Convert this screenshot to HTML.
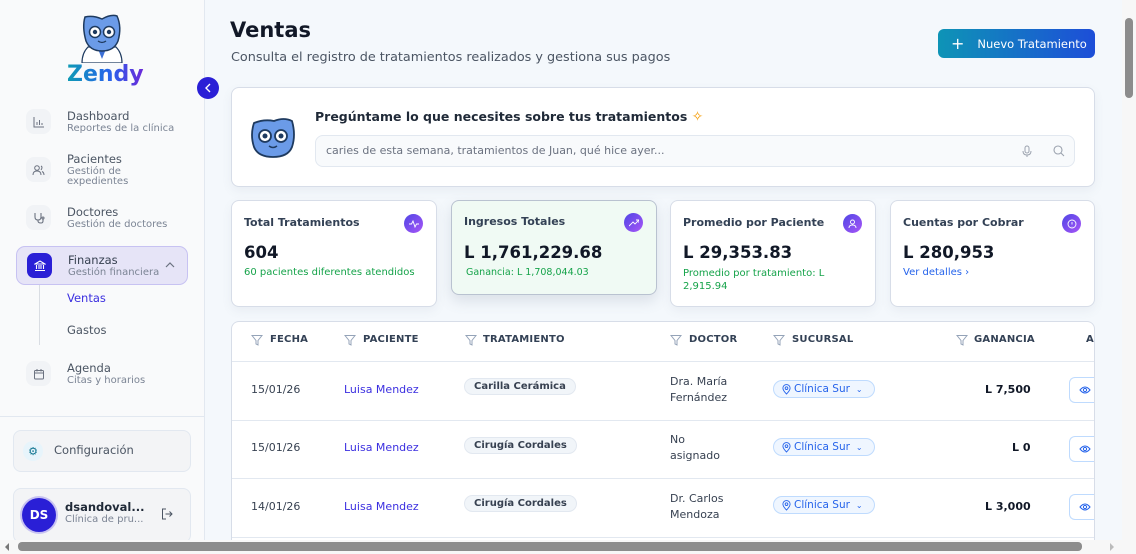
<!DOCTYPE html>
<html><head><meta charset="utf-8"><style>
*{box-sizing:border-box;margin:0;padding:0}
body{width:1136px;height:554px;overflow:hidden;font-family:"DejaVu Sans","Liberation Sans",sans-serif;background:#f4f8fc;position:relative;color:#1e293b}
.a{position:absolute}
.side{left:0;top:0;width:205px;height:540px;background:#f9fafb;border-right:1px solid #e2e8f0}
.ib{width:25px;height:25px;border-radius:8px;background:#f1f3f6;display:flex;align-items:center;justify-content:center}
.t{font-size:11.5px;color:#4b5563}
.s{font-size:10px;color:#7b8494;line-height:10px}
.card{background:#fff;border:1px solid #d7dde8;border-radius:8px;box-shadow:0 4px 10px rgba(100,116,139,.08)}
.sl{font-size:11px;font-weight:bold;color:#334155}
.sv{font-size:16.5px;font-weight:bold;color:#111827}
.gi{width:19px;height:19px;border-radius:50%;background:linear-gradient(135deg,#4f46e5,#a855f7);display:flex;align-items:center;justify-content:center}
.th{font-size:10px;font-weight:bold;color:#334155;letter-spacing:.2px}
.td{font-size:11px;color:#374151}
.pill{font-size:10px;font-weight:bold;color:#374151;background:#f1f5f9;border:1px solid #e2e8f0;border-radius:10px;padding:2px 9px}
.suc{width:102px;height:18px;border:1px solid #bfdbfe;background:#eff6ff;border-radius:9px;color:#2563eb;font-size:10.5px;display:flex;align-items:center;padding-left:8px;gap:3px}
.eye{width:25px;height:26px;border:1px solid #bfdbfe;border-radius:6px 0 0 6px;border-right:none;background:#fff;display:flex;align-items:center;padding-left:9px}
.hl{height:1px;background:#e2e8f0}
</style></head><body>
<div class="a side">
 <svg class="a" style="left:78px;top:13px" width="48" height="50" viewBox="0 0 48 50">
  <path d="M10 34 Q4 40 4 50 H44 Q44 40 38 34Z" fill="#fff" stroke="#1e3a5f" stroke-width="1.2"/>
  <path d="M20 36 L24 46 L28 36Z" fill="#3b6fd6"/>
  <path d="M7 4 Q15 2 24 6 Q33 1 39 3 Q44 14 40 28 Q36 38 24 38 Q12 38 8 28 Q4 14 7 4Z" fill="#6b9be8" stroke="#1e3a5f" stroke-width="1.5"/>
  <circle cx="17" cy="19" r="5.5" fill="#fff" stroke="#1e3a5f" stroke-width="1.5"/><circle cx="31" cy="19" r="5.5" fill="#fff" stroke="#1e3a5f" stroke-width="1.5"/>
  <circle cx="17" cy="19" r="2.2" fill="#1e3a5f"/><circle cx="31" cy="19" r="2.2" fill="#1e3a5f"/>
  <path d="M20 28 Q24 31 28 28" fill="none" stroke="#1e3a5f" stroke-width="1.3"/>
 </svg>
 <div class="a" style="left:67px;top:62px;font-size:22px;font-weight:bold;background:linear-gradient(90deg,#0f9bb4,#2563eb 55%,#6d28d9);-webkit-background-clip:text;color:transparent">Zendy</div>
 <div class="a ib" style="left:26px;top:109px"><svg width="12" height="12" viewBox="0 0 12 12" fill="none" stroke="#6b7280" stroke-width="1"><path d="M1 1V11H11M4 9V6M6.5 9V4M9 9V7"/></svg></div>
 <div class="a t" style="left:67px;top:109px">Dashboard</div><div class="a s" style="left:67px;top:124px">Reportes de la clínica</div>
 <div class="a ib" style="left:26px;top:157px"><svg width="13" height="12" viewBox="0 0 13 12" fill="none" stroke="#6b7280" stroke-width="1"><circle cx="5" cy="4" r="2.3"/><path d="M1 11Q1 7 5 7Q9 7 9 11M9 2Q11 3 9 6M10 7.5Q12 8.5 12 11"/></svg></div>
 <div class="a t" style="left:67px;top:152px">Pacientes</div><div class="a s" style="left:67px;top:167px">Gestión de<br>expedientes</div>
 <div class="a ib" style="left:26px;top:205px"><svg width="12" height="12" viewBox="0 0 12 12" fill="none" stroke="#6b7280" stroke-width="1.1"><path d="M2 1V5Q2 8 5 8Q8 8 8 5V1M5 8V9Q5 11 8 11Q10 11 10 9V7"/><circle cx="10" cy="6" r="1"/></svg></div>
 <div class="a t" style="left:67px;top:205px">Doctores</div><div class="a s" style="left:67px;top:220px">Gestión de doctores</div>
 <div class="a" style="left:16px;top:246px;width:172px;height:39px;background:#e6e4f7;border:1px solid #c7c2f2;border-radius:9px"></div>
 <div class="a" style="left:27px;top:253px;width:25px;height:25px;border-radius:7px;background:#2a1fd6;display:flex;align-items:center;justify-content:center"><svg width="12" height="12" viewBox="0 0 12 12" fill="none" stroke="#fff" stroke-width="1.1"><path d="M1 4L6 1L11 4ZM2.5 5V9M5 5V9M7 5V9M9.5 5V9M1 10.5H11"/></svg></div>
 <div class="a t" style="left:68px;top:253px;color:#374151">Finanzas</div><div class="a s" style="left:68px;top:268px">Gestión financiera</div>
 <svg class="a" style="left:165px;top:262px" width="10" height="6" viewBox="0 0 10 6"><path d="M1 5L5 1L9 5" fill="none" stroke="#6b7280" stroke-width="1.2"/></svg>
 <div class="a" style="left:39px;top:285px;width:1px;height:60px;background:#d9dde3"></div>
 <div class="a t" style="left:67px;top:291px;color:#3b2fe0">Ventas</div>
 <div class="a t" style="left:67px;top:323px">Gastos</div>
 <div class="a ib" style="left:26px;top:361px"><svg width="12" height="12" viewBox="0 0 12 12" fill="none" stroke="#6b7280" stroke-width="1"><rect x="1.5" y="2.5" width="9" height="8.5" rx="1"/><path d="M1.5 5H10.5M4 1V3.5M8 1V3.5"/></svg></div>
 <div class="a t" style="left:67px;top:361px">Agenda</div><div class="a s" style="left:67px;top:376px">Citas y horarios</div>
 <div class="a hl" style="left:0;top:416px;width:204px"></div>
 <div class="a" style="left:13px;top:430px;width:178px;height:42px;background:#f3f4f6;border:1px solid #e2e8f0;border-radius:8px"></div>
 <div class="a" style="left:23px;top:441px;width:20px;height:20px;border-radius:50%;background:#e7f4fb;display:flex;align-items:center;justify-content:center;color:#0e7490;font-size:11px">⚙</div>
 <div class="a t" style="left:54px;top:443px">Configuración</div>
 <div class="a" style="left:13px;top:488px;width:178px;height:55px;background:#f3f4f6;border:1px solid #e2e8f0;border-radius:8px"></div>
 <div class="a" style="left:22px;top:498px;width:34px;height:34px;border-radius:50%;background:#2a1fd6;box-shadow:0 0 0 2px #c7c2f2;color:#fff;font-size:12px;font-weight:bold;display:flex;align-items:center;justify-content:center">DS</div>
 <div class="a" style="left:65px;top:500px;font-size:11.5px;font-weight:bold;color:#1f2937">dsandoval...</div>
 <div class="a s" style="left:65px;top:515px;font-size:10px">Clínica de pru...</div>
 <svg class="a" style="left:161px;top:508px" width="12" height="12" viewBox="0 0 12 12" fill="none" stroke="#4b5563" stroke-width="1"><path d="M5 1H1.5V11H5M4.5 6H11M8.5 3.5L11 6L8.5 8.5"/></svg>
</div>
<div class="a" style="left:197px;top:77px;width:22px;height:22px;border-radius:50%;background:#2a1fd6;display:flex;align-items:center;justify-content:center"><svg width="8" height="10" viewBox="0 0 8 10"><path d="M6 1L2 5L6 9" fill="none" stroke="#fff" stroke-width="1.4"/></svg></div>

<div class="a" style="left:230px;top:18px;font-size:21px;font-weight:bold;color:#111827">Ventas</div>
<div class="a" style="left:231px;top:50px;font-size:12.8px;color:#4b5563">Consulta el registro de tratamientos realizados y gestiona sus pagos</div>
<div class="a" style="left:938px;top:29px;width:157px;height:29px;border-radius:6px;background:linear-gradient(90deg,#0e94b6,#1d4ed8);color:#fff;font-size:11.5px;display:flex;align-items:center"><span style="font-size:16px;margin:0 13px 0 13px">+</span>Nuevo Tratamiento</div>

<div class="a card" style="left:231px;top:87px;width:864px;height:100px"></div>
<svg class="a" style="left:250px;top:115px" width="46" height="44" viewBox="0 0 46 44"><path d="M4 8Q14 4 24 6Q34 2 42 6Q46 20 42 32Q38 42 23 42Q8 42 4 32Q0 20 4 8Z" fill="#6b9be8" stroke="#1e3a5f" stroke-width="1.8"/><circle cx="15" cy="21" r="6" fill="#fff" stroke="#1e3a5f" stroke-width="1.8"/><circle cx="31" cy="21" r="6" fill="#fff" stroke="#1e3a5f" stroke-width="1.8"/><circle cx="15" cy="21" r="2.5" fill="#1e3a5f"/><circle cx="31" cy="21" r="2.5" fill="#1e3a5f"/><path d="M19 31Q23 34 27 31" fill="none" stroke="#1e3a5f" stroke-width="1.5"/></svg>
<div class="a" style="left:315px;top:109px;font-size:12.5px;font-weight:bold;color:#1f2937">Pregúntame lo que necesites sobre tus tratamientos <span style="color:#f59e0b;font-weight:normal;font-size:14px">✧</span></div>
<div class="a" style="left:315px;top:135px;width:760px;height:32px;border:1px solid #e2e8f0;border-radius:8px;background:#f8fafc;font-size:11px;color:#6b7280;padding:8px 10px">caries de esta semana, tratamientos de Juan, qué hice ayer...</div>
<svg class="a" style="left:1021px;top:145px" width="12" height="13" viewBox="0 0 12 13" fill="none" stroke="#9ca3af" stroke-width="1"><rect x="4" y="1" width="4" height="7" rx="2"/><path d="M2 6Q2 10 6 10Q10 10 10 6M6 10V12"/></svg>
<svg class="a" style="left:1053px;top:145px" width="12" height="12" viewBox="0 0 12 12" fill="none" stroke="#9ca3af" stroke-width="1.1"><circle cx="5" cy="5" r="4"/><path d="M8 8L11 11"/></svg>

<div class="a card" style="left:231px;top:200px;width:206px;height:107px"></div>
<div class="a sl" style="left:244px;top:216px">Total Tratamientos</div>
<div class="a gi" style="left:404px;top:214px"><svg width="10" height="8" viewBox="0 0 10 8"><path d="M0 4H2.5L4 1L6 7L7.5 4H10" fill="none" stroke="#fff" stroke-width=".9"/></svg></div>
<div class="a sv" style="left:244px;top:243px">604</div>
<div class="a" style="left:244px;top:267px;font-size:10px;color:#16a34a">60 pacientes diferentes atendidos</div>

<div class="a" style="left:451px;top:200px;width:206px;height:95px;background:#f0faf4;border:1px solid #b9c2d0;border-radius:8px;box-shadow:0 6px 14px rgba(100,116,139,.18)"></div>
<div class="a sl" style="left:464px;top:215px">Ingresos Totales</div>
<div class="a gi" style="left:624px;top:213px"><svg width="10" height="8" viewBox="0 0 10 8"><path d="M0 7L4 3L6 5L10 1M7 1H10V4" fill="none" stroke="#fff" stroke-width=".9"/></svg></div>
<div class="a sv" style="left:464px;top:243px">L 1,761,229.68</div>
<div class="a" style="left:466px;top:267px;font-size:9.5px;color:#16a34a">Ganancia: L 1,708,044.03</div>

<div class="a card" style="left:670px;top:200px;width:206px;height:107px"></div>
<div class="a sl" style="left:683px;top:216px">Promedio por Paciente</div>
<div class="a gi" style="left:843px;top:214px"><svg width="9" height="9" viewBox="0 0 9 9" fill="none" stroke="#fff" stroke-width=".9"><circle cx="4.5" cy="3" r="2"/><path d="M1 9Q1 6 4.5 6Q8 6 8 9"/></svg></div>
<div class="a sv" style="left:683px;top:243px">L 29,353.83</div>
<div class="a" style="left:683px;top:267px;font-size:10px;color:#16a34a;line-height:13px;width:150px">Promedio por tratamiento: L 2,915.94</div>

<div class="a card" style="left:890px;top:200px;width:205px;height:107px"></div>
<div class="a sl" style="left:903px;top:216px">Cuentas por Cobrar</div>
<div class="a gi" style="left:1062px;top:214px"><svg width="10" height="10" viewBox="0 0 10 10" fill="none" stroke="#fff" stroke-width=".9"><circle cx="5" cy="5" r="4"/><path d="M5 3V5.5M5 7V7.3"/></svg></div>
<div class="a sv" style="left:903px;top:243px">L 280,953</div>
<div class="a" style="left:903px;top:267px;font-size:10px;color:#2563eb">Ver detalles ›</div>

<div class="a" style="left:231px;top:321px;width:864px;height:230px;background:#fff;border:1px solid #d7dde8;border-radius:8px;border-bottom:none;overflow:hidden">
 <div class="a hl" style="left:0;top:39px;width:864px"></div>
 <div class="a hl" style="left:0;top:98px;width:864px"></div>
 <div class="a hl" style="left:0;top:156px;width:864px"></div>
 <div class="a hl" style="left:0;top:215px;width:864px"></div>
</div>
<svg width="0" height="0" style="position:absolute"><defs><symbol id="f" viewBox="0 0 12 12"><path d="M1 1.5H11L7 6.5V11L5 10V6.5Z" fill="none" stroke="#94a3b8" stroke-width="1"/></symbol><symbol id="p" viewBox="0 0 10 12"><path d="M5 11Q1 7 1 4.5A4 4 0 0 1 9 4.5Q9 7 5 11Z" fill="none" stroke="#2563eb" stroke-width="1"/><circle cx="5" cy="4.5" r="1.5" fill="none" stroke="#2563eb"/></symbol><symbol id="e" viewBox="0 0 12 8"><path d="M1 4Q6 -2 11 4Q6 10 1 4Z" fill="none" stroke="#2563eb" stroke-width="1"/><circle cx="6" cy="4" r="1.6" fill="none" stroke="#2563eb"/></symbol></defs></svg>
<svg class="a" style="left:251px;top:334px" width="12" height="12"><use href="#f"/></svg><div class="a th" style="left:270px;top:334px">FECHA</div>
<svg class="a" style="left:344px;top:334px" width="12" height="12"><use href="#f"/></svg><div class="a th" style="left:363px;top:334px">PACIENTE</div>
<svg class="a" style="left:465px;top:334px" width="12" height="12"><use href="#f"/></svg><div class="a th" style="left:483px;top:334px">TRATAMIENTO</div>
<svg class="a" style="left:670px;top:334px" width="12" height="12"><use href="#f"/></svg><div class="a th" style="left:689px;top:334px">DOCTOR</div>
<svg class="a" style="left:773px;top:334px" width="12" height="12"><use href="#f"/></svg><div class="a th" style="left:792px;top:334px">SUCURSAL</div>
<svg class="a" style="left:956px;top:334px" width="12" height="12"><use href="#f"/></svg><div class="a th" style="left:974px;top:334px">GANANCIA</div>
<div class="a th" style="left:1086px;top:334px">A</div>

<div class="a td" style="left:251px;top:383px">15/01/26</div>
<div class="a td" style="left:344px;top:383px;color:#3b2fe0">Luisa Mendez</div>
<div class="a pill" style="left:464px;top:378px">Carilla Cerámica</div>
<div class="a td" style="left:670px;top:374px;line-height:16px">Dra. María<br>Fernández</div>
<div class="a suc" style="left:773px;top:380px"><svg width="9" height="11"><use href="#p"/></svg>Clínica Sur <span style="margin-left:3px;font-size:8px">⌄</span></div>
<div class="a td" style="left:985px;top:383px;font-weight:bold;color:#111827">L 7,500</div>
<div class="a eye" style="left:1069px;top:377px"><svg width="12" height="8"><use href="#e"/></svg></div>

<div class="a td" style="left:251px;top:441px">15/01/26</div>
<div class="a td" style="left:344px;top:441px;color:#3b2fe0">Luisa Mendez</div>
<div class="a pill" style="left:464px;top:437px">Cirugía Cordales</div>
<div class="a td" style="left:670px;top:432px;line-height:16px">No<br>asignado</div>
<div class="a suc" style="left:773px;top:438px"><svg width="9" height="11"><use href="#p"/></svg>Clínica Sur <span style="margin-left:3px;font-size:8px">⌄</span></div>
<div class="a td" style="left:1012px;top:441px;font-weight:bold;color:#111827">L 0</div>
<div class="a eye" style="left:1069px;top:436px"><svg width="12" height="8"><use href="#e"/></svg></div>

<div class="a td" style="left:251px;top:500px">14/01/26</div>
<div class="a td" style="left:344px;top:500px;color:#3b2fe0">Luisa Mendez</div>
<div class="a pill" style="left:464px;top:495px">Cirugía Cordales</div>
<div class="a td" style="left:670px;top:491px;line-height:16px">Dr. Carlos<br>Mendoza</div>
<div class="a suc" style="left:773px;top:496px"><svg width="9" height="11"><use href="#p"/></svg>Clínica Sur <span style="margin-left:3px;font-size:8px">⌄</span></div>
<div class="a td" style="left:985px;top:500px;font-weight:bold;color:#111827">L 3,000</div>
<div class="a eye" style="left:1069px;top:494px"><svg width="12" height="8"><use href="#e"/></svg></div>

<div class="a" style="left:1122px;top:0;width:14px;height:554px;background:#f7f7f7"></div>
<div class="a" style="left:1125px;top:18px;width:8px;height:80px;border-radius:4px;background:#8c8c8c"></div>
<div class="a" style="left:0;top:540px;width:1122px;height:14px;background:#f7f7f7"></div>
<div class="a" style="left:18px;top:542px;width:1064px;height:9px;border-radius:4px;background:#8c8c8c"></div>
<div class="a" style="left:5px;top:543px;width:0;height:0;border:4px solid transparent;border-right-color:#777;border-left:none"></div>
<div class="a" style="left:1110px;top:543px;width:0;height:0;border:4px solid transparent;border-left-color:#bbb;border-right:none"></div>
</body></html>
